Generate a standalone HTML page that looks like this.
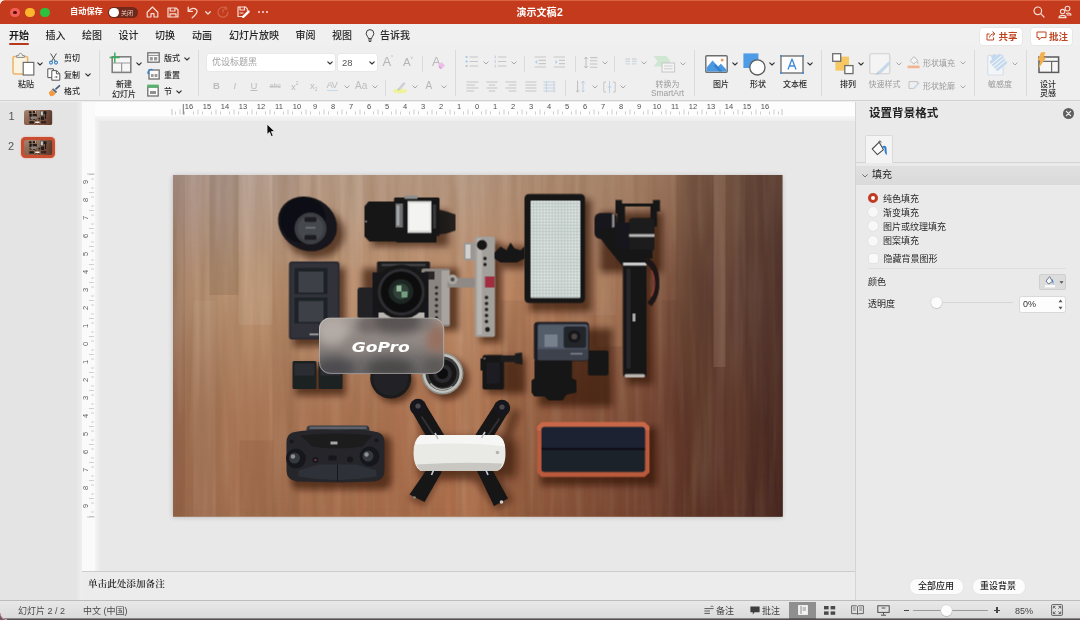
<!DOCTYPE html>
<html lang="zh-CN">
<head>
<meta charset="utf-8">
<title>演示文稿2</title>
<style>
*{box-sizing:border-box;margin:0;padding:0}
html,body{width:1080px;height:620px;overflow:hidden;background:#efeeee}
body{position:relative;font-family:"Liberation Sans","Noto Sans CJK SC",sans-serif;color:#2a2a2a;-webkit-font-smoothing:antialiased}
.abs{position:absolute}
.t{position:absolute;white-space:nowrap;line-height:1}
#titlebar{position:absolute;left:0;top:0;width:1080px;height:24px;background:#c43a1c;border-top:1px solid #dc6242}
#tabs{position:absolute;left:0;top:24px;width:1080px;height:22px;background:#f1f0f0}
#ribbon{position:absolute;left:0;top:46px;width:1080px;height:55px;background:#f0efef;border-bottom:1px solid #d2d1d1}
.tab{position:absolute;top:30px;font-size:10px;font-weight:500;color:#262626;white-space:nowrap;line-height:11px}
.sep{position:absolute;width:1px;background:#dcdbdb}
.lbl{position:absolute;font-size:8px;font-weight:500;color:#2b2b2b;white-space:nowrap;line-height:9px}
.lbl.g{color:#9b9b9b;font-weight:400}
.chev{position:absolute;width:6px;height:4px}
svg{position:absolute;overflow:visible}
#left{position:absolute;left:0;top:102px;width:81px;height:498px;background:#e5e4e5;border-right:1px solid #cfcfcf}
#vruler{position:absolute;left:82px;top:102px;width:13px;height:469px;background:#fafafa}
#hruler{position:absolute;left:95px;top:102px;width:760px;height:14px;background:#fdfdfd}
#edit{position:absolute;left:95px;top:116px;width:760px;height:455px;background:#e8e8e8}
#notes{position:absolute;left:82px;top:571px;width:773px;height:29px;background:#ececec;border-top:1px solid #cdcdcd}
#right{position:absolute;left:855px;top:102px;width:225px;height:498px;background:#eaeaea;border-left:1px solid #d4d4d4}
#status{position:absolute;left:0;top:600px;width:1080px;height:20px;background:linear-gradient(#e9e8e9,#dbdadb);border-top:1px solid #bdbcbd}
.rt{position:absolute;font-size:9px;color:#262626;white-space:nowrap;line-height:10px}
.st{position:absolute;font-size:9px;color:#4a4a4a;white-space:nowrap;line-height:10px;top:606px}
</style>
</head>
<body>
<div id="app" style="position:absolute;left:0;top:0;width:1080px;height:620px;will-change:transform;transform:translateZ(0)">
<div id="titlebar"></div>
<!-- traffic lights -->
<div class="abs" style="left:10px;top:7.5px;width:9.5px;height:9.5px;border-radius:50%;background:#f35f57"></div>
<div class="abs" style="left:13px;top:10.5px;width:3.5px;height:3.5px;border-radius:50%;background:#5e0c08"></div>
<div class="abs" style="left:25px;top:7.5px;width:9.5px;height:9.5px;border-radius:50%;background:#fbb62d"></div>
<div class="abs" style="left:40px;top:7.5px;width:9.5px;height:9.5px;border-radius:50%;background:#2bc13f"></div>
<div class="t" style="left:70px;top:8px;font-size:8.2px;font-weight:700;color:#fff">自动保存</div>
<div class="abs" style="left:108px;top:7px;width:30px;height:10.5px;border-radius:6px;background:#6f281a"></div>
<div class="abs" style="left:109px;top:7.5px;width:9.5px;height:9.5px;border-radius:50%;background:#fff"></div>
<div class="t" style="left:121px;top:9.5px;font-size:6px;color:#e8cfc8">关闭</div>
<!-- home -->
<svg style="left:146px;top:6px" width="13" height="12" viewBox="0 0 13 12" fill="none" stroke="#f6ddd6" stroke-width="1.2" stroke-linejoin="round" stroke-linecap="round"><path d="M1.2 6.2 L6.5 1 L11.8 6.2 V11 H8 V7.6 H5 V11 H1.2 Z"/></svg>
<!-- save -->
<svg style="left:167px;top:6.5px" width="12" height="11" viewBox="0 0 12 11" fill="none" stroke="#f6ddd6" stroke-width="1.2" stroke-linejoin="round"><path d="M1 1 H9 L11 3 V10 H1 Z"/><path d="M3.2 1 V4 H8 V1"/><path d="M3 10 V6.8 H9 V10"/></svg>
<!-- undo -->
<svg style="left:187px;top:5.5px" width="12" height="13" viewBox="0 0 12 13" fill="none" stroke="#f6ddd6" stroke-width="1.3" stroke-linecap="round" stroke-linejoin="round"><path d="M1.2 1.2 V5.4 H5.4"/><path d="M1.6 5 C3.5 2 8 1.3 9.8 4.2 C11.2 6.6 8.6 9 5.2 11.8"/></svg>
<svg style="left:204.5px;top:10.5px" width="6" height="4" viewBox="0 0 6 4" fill="none" stroke="#f6ddd6" stroke-width="1.3" stroke-linecap="round" stroke-linejoin="round"><path d="M.7 .7 L3 3 L5.3 .7"/></svg>
<!-- redo (dim) -->
<svg style="left:217px;top:6px" width="12" height="12" viewBox="0 0 12 12" fill="none" stroke="#d2654b" stroke-width="1.2" stroke-linecap="round"><path d="M9.5 2.6 A5 5 0 1 0 11 6"/><path d="M6 3.5 V6.2"/><path d="M8.8 .8 L9.8 2.8 L7.6 3.2"/></svg>
<!-- save as -->
<svg style="left:237px;top:6px" width="13" height="12" viewBox="0 0 13 12" fill="none" stroke="#f6ddd6" stroke-width="1.2" stroke-linejoin="round" stroke-linecap="round"><path d="M5.5 10.5 H1 V1 H8.5 L10.3 2.8 V4.5"/><path d="M3 1 V4 H7.4 V1"/><path d="M3 7 H6"/><path d="M6.2 10.8 L11.6 5.6" stroke-width="2.4" stroke="#fff"/></svg>
<!-- dots -->
<div class="abs" style="left:258px;top:11px;width:2.2px;height:2.2px;border-radius:50%;background:#f6ddd6;box-shadow:4px 0 0 #f6ddd6,8px 0 0 #f6ddd6"></div>
<div class="t" style="left:516.5px;top:7px;font-size:10px;font-weight:700;color:#fff">演示文稿<span style="font-size:10.5px;margin-left:.5px">2</span></div>
<!-- search -->
<svg style="left:1033px;top:6px" width="12" height="12" viewBox="0 0 12 12" fill="none" stroke="#f6ddd6" stroke-width="1.2" stroke-linecap="round"><circle cx="4.8" cy="4.8" r="3.8"/><path d="M7.7 7.7 L11 11"/></svg>
<!-- people -->
<svg style="left:1058px;top:5px" width="14" height="14" viewBox="0 0 14 14" fill="none" stroke="#f6ddd6" stroke-width="1.1" stroke-linecap="round"><circle cx="9.5" cy="3.6" r="2.4"/><circle cx="4.6" cy="6.6" r="2.2"/><path d="M1 12.6 C1 9.6 8 9.6 8 12.6 Z"/><path d="M8.4 8.6 C10.4 7.6 13 8.4 13 10 H9"/></svg>
<!-- window corners -->
<div class="abs" style="left:0;top:0;width:5px;height:5px;background:radial-gradient(circle at 100% 100%,rgba(0,0,0,0) 4.5px,#f4e6e2 5px)"></div>
<div id="tabs"></div>
<div class="tab" style="left:9px;font-weight:700;color:#1e1e1e">开始</div>
<div class="abs" style="left:9px;top:43px;width:20px;height:2px;border-radius:1px;background:#b7391d"></div>
<div class="tab" style="left:45.5px">插入</div>
<div class="tab" style="left:82px">绘图</div>
<div class="tab" style="left:118.5px">设计</div>
<div class="tab" style="left:155px">切换</div>
<div class="tab" style="left:192px">动画</div>
<div class="tab" style="left:229px">幻灯片放映</div>
<div class="tab" style="left:295.5px">审阅</div>
<div class="tab" style="left:332px">视图</div>
<svg style="left:365px;top:28.5px" width="10" height="13" viewBox="0 0 10 13" fill="none" stroke="#3a3a3a" stroke-width="1" stroke-linecap="round"><path d="M3.4 9.2 C3.4 7.6 1.2 6.8 1.2 4.4 A3.8 3.8 0 0 1 8.8 4.4 C8.8 6.8 6.6 7.6 6.6 9.2 Z"/><path d="M3.6 11 H6.4"/><path d="M4.2 12.4 H5.8"/></svg>
<div class="tab" style="left:380px">告诉我</div>
<!-- share / comment -->
<div class="abs" style="left:980px;top:27.5px;width:41.5px;height:17.5px;border-radius:3px;background:#fff;box-shadow:0 0 0 .5px #dedede"></div>
<svg style="left:986px;top:31px" width="10" height="10" viewBox="0 0 10 10" fill="none" stroke="#c0431f" stroke-width="1" stroke-linecap="round" stroke-linejoin="round"><path d="M3.2 3 H1 V9 H7.6 V6.8"/><path d="M3.6 6.2 C3.8 4 5.4 2.8 8.6 2.8"/><path d="M6.8 .8 L8.9 2.8 L6.8 4.8"/></svg>
<div class="t" style="left:998.5px;top:31.5px;font-size:9.5px;font-weight:700;color:#bf4420">共享</div>
<div class="abs" style="left:1030.5px;top:27.5px;width:41.5px;height:17.5px;border-radius:3px;background:#fff;box-shadow:0 0 0 .5px #dedede"></div>
<svg style="left:1036px;top:31px" width="11" height="10" viewBox="0 0 11 10" fill="none" stroke="#c0431f" stroke-width="1" stroke-linejoin="round"><path d="M1 1 H10 V6.6 H5 L3 8.8 V6.6 H1 Z"/></svg>
<div class="t" style="left:1049px;top:31.5px;font-size:9.5px;font-weight:700;color:#bf4420">批注</div>
<div id="ribbon"></div>
<!-- chevron symbol defs -->
<svg width="0" height="0" style="left:-10px;top:-10px"><defs>
<symbol id="cv" viewBox="0 0 6 4"><path d="M.8 .8 L3 3 L5.2 .8" fill="none" stroke="#333" stroke-width="1.15" stroke-linecap="round" stroke-linejoin="round"/></symbol>
<symbol id="cvg" viewBox="0 0 6 4"><path d="M.8 .8 L3 3 L5.2 .8" fill="none" stroke="#a9a9a9" stroke-width="1" stroke-linecap="round" stroke-linejoin="round"/></symbol>
</defs></svg>
<!-- paste -->
<svg style="left:12px;top:52px" width="23" height="24" viewBox="0 0 23 24" fill="none"><rect x="1" y="4.4" width="14.6" height="17.6" rx="1.4" fill="#fbf3e2" stroke="#e9b565" stroke-width="1.5"/><path d="M4.6 5.4 V3.6 H6.6 C6.6 .6 10.4 .6 10.4 3.6 H12.4 V5.4 Z" fill="#f3f3f3" stroke="#8d8d8d" stroke-width="1"/><rect x="11.2" y="10.4" width="10.6" height="12.6" fill="#fff" stroke="#6e6e6e" stroke-width="1.2"/></svg>
<svg style="left:36.5px;top:61.5px" width="6" height="4"><use href="#cv"/></svg>
<div class="lbl" style="left:18px;top:79.5px">粘贴</div>
<!-- cut -->
<svg style="left:49px;top:52.5px" width="9" height="12" viewBox="0 0 9 12" fill="none" stroke-linecap="round"><path d="M1.8 .8 L6.4 8.4" stroke="#555" stroke-width="1"/><path d="M7.2 .8 L2.6 8.4" stroke="#555" stroke-width="1"/><circle cx="2" cy="9.6" r="1.5" stroke="#3b86c8" stroke-width="1.1"/><circle cx="7" cy="9.6" r="1.5" stroke="#3b86c8" stroke-width="1.1"/></svg>
<div class="lbl" style="left:64px;top:54px">剪切</div>
<!-- copy -->
<svg style="left:47px;top:68px" width="14" height="13" viewBox="0 0 14 13" fill="none" stroke="#555" stroke-width="1" stroke-linejoin="round"><path d="M4.8 9.6 H.8 V.8 H6.4 V2.2" fill="#fff"/><path d="M4.8 2.6 H9.6 L12.8 5.6 V12.2 H4.8 Z" fill="#fff"/><path d="M9.4 2.8 V5.8 H12.6"/><path d="M7.6 9 H10.2 M9.2 8 L10.2 9 L9.2 10" stroke-width=".7"/></svg>
<div class="lbl" style="left:64px;top:70.5px">复制</div>
<svg style="left:84.5px;top:72.5px" width="6" height="4"><use href="#cv"/></svg>
<!-- format painter -->
<svg style="left:47.5px;top:84.5px" width="13" height="12" viewBox="0 0 13 12" fill="none"><path d="M8 3.8 L11.4 .8" stroke="#4b5e78" stroke-width="1.8" stroke-linecap="round"/><path d="M5.2 3.2 L9.2 6.8 L7.8 8.2 L3.8 4.6 Z" fill="#5a6a80"/><path d="M3.6 4.8 L7.6 8.6 C6.4 10.6 4.4 11.4 2.6 11.2 C1.6 10 .8 8.4 1 7.2 C2 6.6 3 5.8 3.6 4.8 Z" fill="#f29a3e"/></svg>
<div class="lbl" style="left:64px;top:87px">格式</div>
<div class="sep" style="left:99px;top:50px;height:46px"></div>
<!-- new slide -->
<svg style="left:108.5px;top:51.5px" width="23" height="22" viewBox="0 0 23 22" fill="none"><rect x="3.2" y="4.8" width="18.6" height="15.6" fill="#f6f6f6" stroke="#808080" stroke-width="1.6"/><path d="M3.4 11 H21.6 M12.6 11 V20" stroke="#9a9a9a" stroke-width="1.2"/><path d="M5.8 .6 V10.8 M.6 5.6 H10.8" stroke="#3fae5d" stroke-width="1.5"/></svg>
<svg style="left:135.5px;top:61.5px" width="6" height="4"><use href="#cv"/></svg>
<div class="lbl" style="left:116px;top:80px">新建</div>
<div class="lbl" style="left:112px;top:89.5px">幻灯片</div>
<!-- layout -->
<svg style="left:146.5px;top:52px" width="13" height="11" viewBox="0 0 13 11" fill="none"><rect x=".8" y=".8" width="11.4" height="9.4" fill="#fafafa" stroke="#6f6f6f" stroke-width="1.3"/><path d="M1 3.4 H12" stroke="#8a8a8a" stroke-width="1"/><rect x="2.8" y="5" width="3" height="3.4" fill="#9a9a9a"/><rect x="7" y="5" width="3.2" height="3.4" fill="#9a9a9a"/></svg>
<div class="lbl" style="left:164px;top:54px">版式</div>
<svg style="left:184px;top:56.5px" width="6" height="4"><use href="#cv"/></svg>
<!-- reset -->
<svg style="left:146.5px;top:68px" width="13" height="12" viewBox="0 0 13 12" fill="none"><rect x="2" y="2" width="10.2" height="9" fill="#fafafa" stroke="#6f6f6f" stroke-width="1.3"/><rect x="4" y="6" width="2.6" height="3" fill="#9a9a9a"/><rect x="7.6" y="6" width="2.8" height="3" fill="#9a9a9a"/><path d="M1 5.6 C.6 2.6 3 .8 5.6 1.6" stroke="#2f84d0" stroke-width="1.3" fill="none"/><path d="M.2 4.4 L1.2 6.6 L3 5" fill="#2f84d0"/></svg>
<div class="lbl" style="left:164px;top:70.5px">重置</div>
<!-- section -->
<svg style="left:146.5px;top:84px" width="12" height="13" viewBox="0 0 12 13" fill="none"><rect x=".8" y="3" width="10.4" height="9" fill="#fafafa" stroke="#6f6f6f" stroke-width="1.3"/><rect x=".2" y=".6" width="11.6" height="3" fill="#55b36a"/><rect x="3" y="7" width="6" height="3" fill="#8f8f8f"/></svg>
<div class="lbl" style="left:164px;top:87px">节</div>
<svg style="left:175.5px;top:89.5px" width="6" height="4"><use href="#cv"/></svg>
<div class="sep" style="left:198px;top:50px;height:46px"></div>
<!-- font box -->
<div class="abs" style="left:207px;top:53.5px;width:128px;height:17.5px;border-radius:2.5px;background:#fff;box-shadow:0 0 0 .5px #e2e2e2"></div>
<div class="t" style="left:212px;top:57.5px;font-size:9px;color:#a2a2a2">优设标题黑</div>
<svg style="left:327px;top:60.5px" width="6" height="4"><use href="#cv"/></svg>
<div class="abs" style="left:338px;top:53.5px;width:38.5px;height:17.5px;border-radius:2.5px;background:#fff;box-shadow:0 0 0 .5px #e2e2e2"></div>
<div class="t" style="left:342px;top:57.5px;font-size:9.5px;color:#555">28</div>
<svg style="left:369px;top:60.5px" width="6" height="4"><use href="#cv"/></svg>
<div class="t" style="left:382.5px;top:54.5px;font-size:13px;color:#b4b4b4">A<span style="font-size:5px;vertical-align:7px;margin-left:-.5px">^</span></div>
<div class="t" style="left:403px;top:56px;font-size:11.5px;color:#b4b4b4">A<span style="font-size:5px;vertical-align:6px;margin-left:-.5px">˅</span></div>
<div class="sep" style="left:422px;top:56px;height:16px"></div>
<div class="t" style="left:432px;top:55px;font-size:13px;color:#b9b9b9">A</div>
<svg style="left:437px;top:61px" width="9" height="9" viewBox="0 0 9 9"><path d="M1 4.4 L4.4 1 L8 4.6 L4.6 8 Z" fill="#e9bfe9"/><path d="M2 5.4 L4 7.4" stroke="#d99bd9" stroke-width="1.4"/></svg>
<!-- row 2 -->
<div class="t" style="left:213px;top:80.5px;font-size:9.5px;font-weight:700;color:#bcbcbc">B</div>
<div class="t" style="left:233.5px;top:80.5px;font-size:9.5px;font-style:italic;color:#bcbcbc">I</div>
<div class="t" style="left:250.5px;top:80.5px;font-size:9.5px;color:#bcbcbc;text-decoration:underline">U</div>
<div class="t" style="left:269.5px;top:82px;font-size:7px;color:#c2c2c2;text-decoration:line-through">abc</div>
<div class="t" style="left:291px;top:81px;font-size:9.5px;color:#bcbcbc">x<span style="font-size:5px;vertical-align:5px">2</span></div>
<div class="t" style="left:310px;top:81px;font-size:9.5px;color:#bcbcbc">x<span style="font-size:5px;vertical-align:-2px">2</span></div>
<div class="t" style="left:326.5px;top:79.5px;font-size:9.5px;color:#bcbcbc;letter-spacing:-.6px">AV</div>
<div class="abs" style="left:327px;top:89.5px;width:11px;height:1.2px;background:#c5d9ea"></div>
<svg style="left:344px;top:85px" width="6" height="4"><use href="#cvg"/></svg>
<div class="t" style="left:355px;top:81px;font-size:10px;color:#bcbcbc">Aa</div>
<svg style="left:372px;top:85px" width="6" height="4"><use href="#cvg"/></svg>
<div class="sep" style="left:385px;top:80px;height:16px"></div>
<svg style="left:393px;top:79.5px" width="16" height="14" viewBox="0 0 16 14"><ellipse cx="7" cy="11" rx="7" ry="2.6" fill="#eef29a"/><path d="M5 8.6 L10.6 2 L12.6 3.8 L7 10 Z" fill="#cfcfd6"/><path d="M4.2 10.4 L5.2 8.6 L6.8 10 Z" fill="#b9b9c4"/></svg>
<svg style="left:412px;top:85px" width="6" height="4"><use href="#cvg"/></svg>
<div class="t" style="left:425.5px;top:80.5px;font-size:10px;color:#b6b6b6">A</div>
<svg style="left:440.5px;top:85px" width="6" height="4"><use href="#cvg"/></svg>
<div class="sep" style="left:455px;top:50px;height:46px"></div>
<!-- paragraph group (disabled look) -->
<svg style="left:465px;top:55px" width="14" height="13" viewBox="0 0 14 13" fill="none"><g fill="#9fc3e6"><circle cx="1.6" cy="2" r="1.1"/><circle cx="1.6" cy="6.5" r="1.1"/></g><circle cx="1.6" cy="11" r="1.1" fill="#bdbdbd"/><path d="M4.6 2 H13 M4.6 6.5 H13 M4.6 11 H13" stroke="#c6c6c6" stroke-width="1.2"/></svg>
<svg style="left:482.5px;top:61px" width="6" height="4"><use href="#cvg"/></svg>
<svg style="left:494px;top:55px" width="13" height="13" viewBox="0 0 13 13" fill="none"><path d="M1.2 .6 V3.2 M1.2 5.2 V7.8 M1.2 9.8 V12.4" stroke="#bcc9d6" stroke-width="1"/><path d="M4 2 H12.4 M4 6.5 H12.4 M4 11 H12.4" stroke="#c6c6c6" stroke-width="1.2"/></svg>
<svg style="left:511px;top:61px" width="6" height="4"><use href="#cvg"/></svg>
<div class="sep" style="left:524px;top:56px;height:16px"></div>
<svg style="left:534px;top:56px" width="13" height="12" viewBox="0 0 13 12" fill="none"><path d="M.6 1 H12 M4.6 4.4 H12 M4.6 7.6 H12 M.6 11 H12" stroke="#c8c8c8" stroke-width="1.1"/><path d="M3.2 4 L1 6 L3.2 8 Z" fill="#b5cbe0"/></svg>
<svg style="left:553px;top:56px" width="13" height="12" viewBox="0 0 13 12" fill="none"><path d="M.6 1 H12 M6 4.4 H12 M6 7.6 H12 M.6 11 H12" stroke="#c8c8c8" stroke-width="1.1"/><path d="M2.4 4 L4.6 6 L2.4 8 Z" fill="#b5cbe0"/></svg>
<div class="sep" style="left:575px;top:56px;height:16px"></div>
<svg style="left:584px;top:55.5px" width="14" height="13" viewBox="0 0 14 13" fill="none"><path d="M2 1 V12 M.4 3 L2 1 L3.6 3 M.4 10 L2 12 L3.6 10" stroke="#bdbdbd" stroke-width="1"/><path d="M6 1.6 H13.4 M6 4.8 H13.4 M6 8 H13.4 M6 11.2 H13.4" stroke="#c6c6c6" stroke-width="1.1"/></svg>
<svg style="left:601.5px;top:61px" width="6" height="4"><use href="#cvg"/></svg>
<div class="sep" style="left:614px;top:56px;height:16px"></div>
<svg style="left:625px;top:58px" width="12" height="8" viewBox="0 0 12 8" fill="none"><path d="M.4 1 H5 M.4 3.4 H5 M.4 5.8 H5 M7 1 H11.6 M7 3.4 H11.6 M7 5.8 H11.6" stroke="#cfd8e0" stroke-width="1.3"/></svg>
<svg style="left:641px;top:61px" width="6" height="4"><use href="#cvg"/></svg>
<!-- smartart -->
<svg style="left:652.5px;top:55px" width="23" height="18" viewBox="0 0 23 18" fill="none"><path d="M.6 1 H13.4 L17.4 6.2 L13.4 11.6 H.6 L4.6 6.2 Z" fill="#cfe6d2"/><rect x="9" y="8" width="12.6" height="9" fill="#f4f4f4" stroke="#c6c6c6" stroke-width="1"/><path d="M11 11 H19.6 M11 13.8 H19.6" stroke="#cdcdcd" stroke-width="1"/></svg>
<svg style="left:679.5px;top:62px" width="6" height="4"><use href="#cvg"/></svg>
<div class="lbl g" style="left:655.5px;top:79.5px">转换为</div>
<div class="lbl g" style="left:651px;top:89px;font-size:8.4px">SmartArt</div>
<!-- row 2 paragraph -->
<svg style="left:466px;top:81px" width="13" height="11" viewBox="0 0 13 11" fill="none"><path d="M.4 1 H12.4 M.4 4 H9 M.4 7 H12.4 M.4 10 H8" stroke="#c6c6c6" stroke-width="1.1"/></svg>
<svg style="left:485.5px;top:81px" width="12" height="11" viewBox="0 0 12 11" fill="none"><path d="M.4 1 H11.4 M2.6 4 H9.2 M.4 7 H11.4 M2.6 10 H9.2" stroke="#c6c6c6" stroke-width="1.1"/></svg>
<svg style="left:505px;top:81px" width="12" height="11" viewBox="0 0 12 11" fill="none"><path d="M.4 1 H11.4 M3.6 4 H11.4 M.4 7 H11.4 M3.6 10 H11.4" stroke="#c6c6c6" stroke-width="1.1"/></svg>
<svg style="left:524.5px;top:81px" width="12" height="11" viewBox="0 0 12 11" fill="none"><path d="M.4 1 H11.4 M.4 4 H11.4 M.4 7 H11.4 M.4 10 H11.4" stroke="#c6c6c6" stroke-width="1.1"/></svg>
<svg style="left:543px;top:80.5px" width="14" height="12" viewBox="0 0 14 12" fill="none"><path d="M.4 1 H12.4 M.4 4 H12.4 M.4 7 H12.4 M.4 10 H12.4" stroke="#c4d3e2" stroke-width="1.1"/><path d="M3.4 0 V11.6 M11 0 V11.6" stroke="#c4d3e2" stroke-width="1"/></svg>
<div class="sep" style="left:565px;top:80px;height:16px"></div>
<svg style="left:575.5px;top:80px" width="10" height="13" viewBox="0 0 10 13" fill="none"><path d="M1.6 .6 V12 M.2 10.4 L1.6 12.2 L3 10.4" stroke="#bdbdbd" stroke-width="1"/><path d="M7 1 V12 M5.2 3.4 L7 1 L8.8 3.4 M5.6 10.4 L7 12 L8.4 10.4" stroke="#bcd0e4" stroke-width="1"/></svg>
<svg style="left:591.5px;top:85px" width="6" height="4"><use href="#cvg"/></svg>
<svg style="left:603px;top:80.5px" width="13" height="12" viewBox="0 0 13 12" fill="none"><path d="M3 1 H.8 V11 H3 M10 1 H12.2 V11 H10" stroke="#c6c6c6" stroke-width="1"/><path d="M6.5 0 V12 M4.6 6 H8.4" stroke="#bcd0e4" stroke-width="1"/></svg>
<svg style="left:620px;top:85px" width="6" height="4"><use href="#cvg"/></svg>
<div class="sep" style="left:694px;top:50px;height:46px"></div>
<!-- picture -->
<svg style="left:704.5px;top:55px" width="23" height="18" viewBox="0 0 23 18" fill="none"><rect x=".8" y=".8" width="21.4" height="16.4" rx="1" fill="#fdfdfd" stroke="#6d6d6d" stroke-width="1.4"/><path d="M1.6 12.4 L7.6 5.6 L13 11.6 L15.8 8.8 L21.4 14.6 V16.4 H1.6 Z" fill="#4a98e2"/><path d="M10.6 9 L17.6 16.4 H14 L8.8 11 Z" fill="#2f77c2" opacity=".75"/><circle cx="17.2" cy="5" r="1.5" fill="#e99a62"/></svg>
<svg style="left:731.5px;top:62px" width="6" height="4"><use href="#cv"/></svg>
<div class="lbl" style="left:713px;top:80px">图片</div>
<!-- shapes -->
<svg style="left:743px;top:52.5px" width="23" height="23" viewBox="0 0 23 23" fill="none"><rect x=".4" y=".4" width="15" height="14.6" fill="#4f9ce6"/><circle cx="14.4" cy="14.4" r="7.6" fill="#fdfdfd" stroke="#5a5a5a" stroke-width="1.3"/></svg>
<svg style="left:768.5px;top:62px" width="6" height="4"><use href="#cv"/></svg>
<div class="lbl" style="left:750px;top:80px">形状</div>
<!-- textbox -->
<svg style="left:779.5px;top:54.5px" width="24" height="19" viewBox="0 0 24 19" fill="none"><rect x="1" y="1" width="22" height="17" fill="#fdfdfd" stroke="#5d5d5d" stroke-width="1.2"/><g fill="#4a90d6"><rect x="0" y="0" width="2" height="2"/><rect x="22" y="0" width="2" height="2"/><rect x="0" y="17" width="2" height="2"/><rect x="22" y="17" width="2" height="2"/></g><path d="M8 14.6 L12 4 L16 14.6 M9.4 11 H14.6" stroke="#3f8ad6" stroke-width="1.3" stroke-linejoin="round"/></svg>
<svg style="left:806.5px;top:62px" width="6" height="4"><use href="#cv"/></svg>
<div class="lbl" style="left:783px;top:80px">文本框</div>
<div class="sep" style="left:821px;top:50px;height:46px"></div>
<!-- arrange -->
<svg style="left:832px;top:52.5px" width="22" height="22" viewBox="0 0 22 22" fill="none"><rect x="3.4" y="3.6" width="13.6" height="14" fill="#f7c862"/><rect x=".7" y=".7" width="8" height="7.6" fill="#fdfdfd" stroke="#6d6d6d" stroke-width="1.3"/><rect x="12.8" y="12.6" width="8.2" height="8" fill="#fdfdfd" stroke="#6d6d6d" stroke-width="1.3"/></svg>
<svg style="left:858px;top:62px" width="6" height="4"><use href="#cv"/></svg>
<div class="lbl" style="left:840px;top:79.5px">排列</div>
<!-- quick styles -->
<svg style="left:869px;top:52.5px" width="23" height="23" viewBox="0 0 23 23" fill="none"><rect x=".8" y=".8" width="20" height="20" rx="1.6" fill="#f4f4f4" stroke="#cfcfcf" stroke-width="1.1"/><path d="M8.6 19 L19.6 8.4 L21.8 10.4 L11.4 21 Z" fill="#c6d9ea"/><path d="M6.2 21.8 L8.8 18.8 L11.6 21 Z" fill="#b7cce0"/></svg>
<svg style="left:895.5px;top:62px" width="6" height="4"><use href="#cvg"/></svg>
<div class="lbl g" style="left:868.5px;top:79.5px">快速样式</div>
<!-- shape fill -->
<svg style="left:906.5px;top:55px" width="13" height="14" viewBox="0 0 13 14" fill="none"><path d="M3.2 5.6 L7 1.6 L10.6 5.4 L6.8 9 Z" fill="#f5f5f5" stroke="#b9b9b9" stroke-width="1"/><path d="M10.8 6 C11.8 7.4 11.8 8.6 10.8 8.8 C9.8 8.6 9.8 7.4 10.8 6 Z" fill="#bdbdbd"/><rect x=".6" y="10.6" width="12" height="2.6" fill="#f2b48c"/></svg>
<div class="lbl g" style="left:923px;top:58.5px">形状填充</div>
<svg style="left:959.5px;top:60.5px" width="6" height="4"><use href="#cvg"/></svg>
<svg style="left:907.5px;top:80px" width="12" height="10" viewBox="0 0 12 10" fill="none"><path d="M1 1.6 H9.6 V5 M5 8.4 H1 V1.6" stroke="#c2c2c2" stroke-width="1"/><path d="M4.6 8.8 L10.6 2 L11.8 3 L6 9.4 Z" fill="#c4d6e8"/></svg>
<div class="lbl g" style="left:923px;top:82px">形状轮廓</div>
<svg style="left:959.5px;top:84.5px" width="6" height="4"><use href="#cvg"/></svg>
<div class="sep" style="left:974px;top:50px;height:46px"></div>
<!-- sensitivity -->
<svg style="left:987px;top:51.5px" width="22" height="24" viewBox="0 0 22 24" fill="none"><rect x=".8" y="3.4" width="15.4" height="19.6" rx="1" fill="#f3f6f9" stroke="#d5dde6" stroke-width="1.1"/><g transform="rotate(-40 12 10)"><rect x="4.6" y="3.6" width="13.6" height="12.6" rx="1.6" fill="#c3d9ee"/><path d="M4.6 7 H18.2 M4.6 10 H18.2 M4.6 13 H18.2" stroke="#f3f6f9" stroke-width="1"/><rect x="8.8" y="0.8" width="5" height="3" fill="#c3d9ee"/></g></svg>
<svg style="left:1011.5px;top:62px" width="6" height="4"><use href="#cvg"/></svg>
<div class="lbl g" style="left:988px;top:79.5px">敏感度</div>
<div class="sep" style="left:1026px;top:50px;height:46px"></div>
<!-- design ideas -->
<svg style="left:1035.5px;top:51.5px" width="24" height="22" viewBox="0 0 24 22" fill="none"><rect x="3" y="5" width="19.6" height="15.4" fill="#f6f6f6" stroke="#5b5b5b" stroke-width="1.5"/><path d="M3.4 9.4 H22.4 M15.6 9.6 V20" stroke="#6a6a6a" stroke-width="1.2"/><path d="M5 .2 H9.6 L7.4 5.6 H10.2 L2.6 16.6 L4.4 8.6 H1.6 Z" fill="#f4b04c"/></svg>
<div class="lbl" style="left:1040px;top:79.5px">设计</div>
<div class="lbl" style="left:1040px;top:89px">灵感</div>
<div id="left"></div>
<div class="abs" style="left:76px;top:102px;width:5px;height:498px;background:linear-gradient(90deg,#e5e4e5,#ededed)"></div>
<div class="abs" style="left:82px;top:102px;width:13px;height:14px;background:#ececec"></div>
<div id="edit"></div>
<div class="t" style="left:8.5px;top:110.5px;font-size:11px;color:#555">1</div>
<div class="t" style="left:8px;top:140.5px;font-size:11px;color:#555">2</div>
<div id="hruler"></div>
<div class="abs" style="left:95px;top:116px;width:760px;height:5px;background:linear-gradient(#f6f6f6,#eeeeee)"></div>
<svg style="left:95px;top:102px" width="760" height="14" fill="none" stroke="#b8b8b8" stroke-width=".7"><path d="M80.50 9.5 V12.5"/><path d="M85.00 7.5 V12.5"/><path d="M89.50 9.5 V12.5"/><path d="M98.50 9.5 V12.5"/><path d="M103.00 7.5 V12.5"/><path d="M107.50 9.5 V12.5"/><path d="M116.50 9.5 V12.5"/><path d="M121.00 7.5 V12.5"/><path d="M125.50 9.5 V12.5"/><path d="M134.50 9.5 V12.5"/><path d="M139.00 7.5 V12.5"/><path d="M143.50 9.5 V12.5"/><path d="M152.50 9.5 V12.5"/><path d="M157.00 7.5 V12.5"/><path d="M161.50 9.5 V12.5"/><path d="M170.50 9.5 V12.5"/><path d="M175.00 7.5 V12.5"/><path d="M179.50 9.5 V12.5"/><path d="M188.50 9.5 V12.5"/><path d="M193.00 7.5 V12.5"/><path d="M197.50 9.5 V12.5"/><path d="M206.50 9.5 V12.5"/><path d="M211.00 7.5 V12.5"/><path d="M215.50 9.5 V12.5"/><path d="M224.50 9.5 V12.5"/><path d="M229.00 7.5 V12.5"/><path d="M233.50 9.5 V12.5"/><path d="M242.50 9.5 V12.5"/><path d="M247.00 7.5 V12.5"/><path d="M251.50 9.5 V12.5"/><path d="M260.50 9.5 V12.5"/><path d="M265.00 7.5 V12.5"/><path d="M269.50 9.5 V12.5"/><path d="M278.50 9.5 V12.5"/><path d="M283.00 7.5 V12.5"/><path d="M287.50 9.5 V12.5"/><path d="M296.50 9.5 V12.5"/><path d="M301.00 7.5 V12.5"/><path d="M305.50 9.5 V12.5"/><path d="M314.50 9.5 V12.5"/><path d="M319.00 7.5 V12.5"/><path d="M323.50 9.5 V12.5"/><path d="M332.50 9.5 V12.5"/><path d="M337.00 7.5 V12.5"/><path d="M341.50 9.5 V12.5"/><path d="M350.50 9.5 V12.5"/><path d="M355.00 7.5 V12.5"/><path d="M359.50 9.5 V12.5"/><path d="M368.50 9.5 V12.5"/><path d="M373.00 7.5 V12.5"/><path d="M377.50 9.5 V12.5"/><path d="M386.50 9.5 V12.5"/><path d="M391.00 7.5 V12.5"/><path d="M395.50 9.5 V12.5"/><path d="M404.50 9.5 V12.5"/><path d="M409.00 7.5 V12.5"/><path d="M413.50 9.5 V12.5"/><path d="M422.50 9.5 V12.5"/><path d="M427.00 7.5 V12.5"/><path d="M431.50 9.5 V12.5"/><path d="M440.50 9.5 V12.5"/><path d="M445.00 7.5 V12.5"/><path d="M449.50 9.5 V12.5"/><path d="M458.50 9.5 V12.5"/><path d="M463.00 7.5 V12.5"/><path d="M467.50 9.5 V12.5"/><path d="M476.50 9.5 V12.5"/><path d="M481.00 7.5 V12.5"/><path d="M485.50 9.5 V12.5"/><path d="M494.50 9.5 V12.5"/><path d="M499.00 7.5 V12.5"/><path d="M503.50 9.5 V12.5"/><path d="M512.50 9.5 V12.5"/><path d="M517.00 7.5 V12.5"/><path d="M521.50 9.5 V12.5"/><path d="M530.50 9.5 V12.5"/><path d="M535.00 7.5 V12.5"/><path d="M539.50 9.5 V12.5"/><path d="M548.50 9.5 V12.5"/><path d="M553.00 7.5 V12.5"/><path d="M557.50 9.5 V12.5"/><path d="M566.50 9.5 V12.5"/><path d="M571.00 7.5 V12.5"/><path d="M575.50 9.5 V12.5"/><path d="M584.50 9.5 V12.5"/><path d="M589.00 7.5 V12.5"/><path d="M593.50 9.5 V12.5"/><path d="M602.50 9.5 V12.5"/><path d="M607.00 7.5 V12.5"/><path d="M611.50 9.5 V12.5"/><path d="M620.50 9.5 V12.5"/><path d="M625.00 7.5 V12.5"/><path d="M629.50 9.5 V12.5"/><path d="M638.50 9.5 V12.5"/><path d="M643.00 7.5 V12.5"/><path d="M647.50 9.5 V12.5"/><path d="M656.50 9.5 V12.5"/><path d="M661.00 7.5 V12.5"/><path d="M665.50 9.5 V12.5"/><path d="M674.50 9.5 V12.5"/><path d="M679.00 7.5 V12.5"/><path d="M683.50 9.5 V12.5"/><path d="M77 7 V13 M687 7 V13" stroke="#aaa"/><path d="M88.30000000000001 2 V12.5" stroke="#777" stroke-width="1"/></svg>
<div class="t" style="left:181.0px;top:102.6px;width:16px;text-align:center;font-size:7.5px;color:#4f4f4f">16</div>
<div class="t" style="left:199.0px;top:102.6px;width:16px;text-align:center;font-size:7.5px;color:#4f4f4f">15</div>
<div class="t" style="left:217.0px;top:102.6px;width:16px;text-align:center;font-size:7.5px;color:#4f4f4f">14</div>
<div class="t" style="left:235.0px;top:102.6px;width:16px;text-align:center;font-size:7.5px;color:#4f4f4f">13</div>
<div class="t" style="left:253.0px;top:102.6px;width:16px;text-align:center;font-size:7.5px;color:#4f4f4f">12</div>
<div class="t" style="left:271.0px;top:102.6px;width:16px;text-align:center;font-size:7.5px;color:#4f4f4f">11</div>
<div class="t" style="left:289.0px;top:102.6px;width:16px;text-align:center;font-size:7.5px;color:#4f4f4f">10</div>
<div class="t" style="left:307.0px;top:102.6px;width:16px;text-align:center;font-size:7.5px;color:#4f4f4f">9</div>
<div class="t" style="left:325.0px;top:102.6px;width:16px;text-align:center;font-size:7.5px;color:#4f4f4f">8</div>
<div class="t" style="left:343.0px;top:102.6px;width:16px;text-align:center;font-size:7.5px;color:#4f4f4f">7</div>
<div class="t" style="left:361.0px;top:102.6px;width:16px;text-align:center;font-size:7.5px;color:#4f4f4f">6</div>
<div class="t" style="left:379.0px;top:102.6px;width:16px;text-align:center;font-size:7.5px;color:#4f4f4f">5</div>
<div class="t" style="left:397.0px;top:102.6px;width:16px;text-align:center;font-size:7.5px;color:#4f4f4f">4</div>
<div class="t" style="left:415.0px;top:102.6px;width:16px;text-align:center;font-size:7.5px;color:#4f4f4f">3</div>
<div class="t" style="left:433.0px;top:102.6px;width:16px;text-align:center;font-size:7.5px;color:#4f4f4f">2</div>
<div class="t" style="left:451.0px;top:102.6px;width:16px;text-align:center;font-size:7.5px;color:#4f4f4f">1</div>
<div class="t" style="left:469.0px;top:102.6px;width:16px;text-align:center;font-size:7.5px;color:#4f4f4f">0</div>
<div class="t" style="left:487.0px;top:102.6px;width:16px;text-align:center;font-size:7.5px;color:#4f4f4f">1</div>
<div class="t" style="left:505.0px;top:102.6px;width:16px;text-align:center;font-size:7.5px;color:#4f4f4f">2</div>
<div class="t" style="left:523.0px;top:102.6px;width:16px;text-align:center;font-size:7.5px;color:#4f4f4f">3</div>
<div class="t" style="left:541.0px;top:102.6px;width:16px;text-align:center;font-size:7.5px;color:#4f4f4f">4</div>
<div class="t" style="left:559.0px;top:102.6px;width:16px;text-align:center;font-size:7.5px;color:#4f4f4f">5</div>
<div class="t" style="left:577.0px;top:102.6px;width:16px;text-align:center;font-size:7.5px;color:#4f4f4f">6</div>
<div class="t" style="left:595.0px;top:102.6px;width:16px;text-align:center;font-size:7.5px;color:#4f4f4f">7</div>
<div class="t" style="left:613.0px;top:102.6px;width:16px;text-align:center;font-size:7.5px;color:#4f4f4f">8</div>
<div class="t" style="left:631.0px;top:102.6px;width:16px;text-align:center;font-size:7.5px;color:#4f4f4f">9</div>
<div class="t" style="left:649.0px;top:102.6px;width:16px;text-align:center;font-size:7.5px;color:#4f4f4f">10</div>
<div class="t" style="left:667.0px;top:102.6px;width:16px;text-align:center;font-size:7.5px;color:#4f4f4f">11</div>
<div class="t" style="left:685.0px;top:102.6px;width:16px;text-align:center;font-size:7.5px;color:#4f4f4f">12</div>
<div class="t" style="left:703.0px;top:102.6px;width:16px;text-align:center;font-size:7.5px;color:#4f4f4f">13</div>
<div class="t" style="left:721.0px;top:102.6px;width:16px;text-align:center;font-size:7.5px;color:#4f4f4f">14</div>
<div class="t" style="left:739.0px;top:102.6px;width:16px;text-align:center;font-size:7.5px;color:#4f4f4f">15</div>
<div class="t" style="left:757.0px;top:102.6px;width:16px;text-align:center;font-size:7.5px;color:#4f4f4f">16</div>
<div id="vruler"></div>
<div class="abs" style="left:95px;top:121px;width:5px;height:450px;background:linear-gradient(90deg,#f4f4f4,#e9e9e9)"></div>
<svg style="left:82px;top:102px" width="13" height="469" fill="none" stroke="#bdbdbd" stroke-width=".7"><path d="M7 72.50 H12"/><path d="M9 77.00 H12"/><path d="M9 86.00 H12"/><path d="M7 90.50 H12"/><path d="M9 95.00 H12"/><path d="M9 104.00 H12"/><path d="M7 108.50 H12"/><path d="M9 113.00 H12"/><path d="M9 122.00 H12"/><path d="M7 126.50 H12"/><path d="M9 131.00 H12"/><path d="M9 140.00 H12"/><path d="M7 144.50 H12"/><path d="M9 149.00 H12"/><path d="M9 158.00 H12"/><path d="M7 162.50 H12"/><path d="M9 167.00 H12"/><path d="M9 176.00 H12"/><path d="M7 180.50 H12"/><path d="M9 185.00 H12"/><path d="M9 194.00 H12"/><path d="M7 198.50 H12"/><path d="M9 203.00 H12"/><path d="M9 212.00 H12"/><path d="M7 216.50 H12"/><path d="M9 221.00 H12"/><path d="M9 230.00 H12"/><path d="M7 234.50 H12"/><path d="M9 239.00 H12"/><path d="M9 248.00 H12"/><path d="M7 252.50 H12"/><path d="M9 257.00 H12"/><path d="M9 266.00 H12"/><path d="M7 270.50 H12"/><path d="M9 275.00 H12"/><path d="M9 284.00 H12"/><path d="M7 288.50 H12"/><path d="M9 293.00 H12"/><path d="M9 302.00 H12"/><path d="M7 306.50 H12"/><path d="M9 311.00 H12"/><path d="M9 320.00 H12"/><path d="M7 324.50 H12"/><path d="M9 329.00 H12"/><path d="M9 338.00 H12"/><path d="M7 342.50 H12"/><path d="M9 347.00 H12"/><path d="M9 356.00 H12"/><path d="M7 360.50 H12"/><path d="M9 365.00 H12"/><path d="M9 374.00 H12"/><path d="M7 378.50 H12"/><path d="M9 383.00 H12"/><path d="M9 392.00 H12"/><path d="M7 396.50 H12"/><path d="M9 401.00 H12"/><path d="M9 410.00 H12"/><path d="M7 414.50 H12"/><path d="M5 72 H12.5 M5 415 H12.5" stroke="#b0b0b0"/></svg>
<div class="t" style="left:78px;top:177.9px;width:16px;height:8px;text-align:center;font-size:7.5px;color:#5f5f5f;transform:rotate(-90deg)">9</div>
<div class="t" style="left:78px;top:195.9px;width:16px;height:8px;text-align:center;font-size:7.5px;color:#5f5f5f;transform:rotate(-90deg)">8</div>
<div class="t" style="left:78px;top:213.9px;width:16px;height:8px;text-align:center;font-size:7.5px;color:#5f5f5f;transform:rotate(-90deg)">7</div>
<div class="t" style="left:78px;top:231.9px;width:16px;height:8px;text-align:center;font-size:7.5px;color:#5f5f5f;transform:rotate(-90deg)">6</div>
<div class="t" style="left:78px;top:249.9px;width:16px;height:8px;text-align:center;font-size:7.5px;color:#5f5f5f;transform:rotate(-90deg)">5</div>
<div class="t" style="left:78px;top:267.9px;width:16px;height:8px;text-align:center;font-size:7.5px;color:#5f5f5f;transform:rotate(-90deg)">4</div>
<div class="t" style="left:78px;top:285.9px;width:16px;height:8px;text-align:center;font-size:7.5px;color:#5f5f5f;transform:rotate(-90deg)">3</div>
<div class="t" style="left:78px;top:303.9px;width:16px;height:8px;text-align:center;font-size:7.5px;color:#5f5f5f;transform:rotate(-90deg)">2</div>
<div class="t" style="left:78px;top:321.9px;width:16px;height:8px;text-align:center;font-size:7.5px;color:#5f5f5f;transform:rotate(-90deg)">1</div>
<div class="t" style="left:78px;top:339.9px;width:16px;height:8px;text-align:center;font-size:7.5px;color:#5f5f5f;transform:rotate(-90deg)">0</div>
<div class="t" style="left:78px;top:357.9px;width:16px;height:8px;text-align:center;font-size:7.5px;color:#5f5f5f;transform:rotate(-90deg)">1</div>
<div class="t" style="left:78px;top:375.9px;width:16px;height:8px;text-align:center;font-size:7.5px;color:#5f5f5f;transform:rotate(-90deg)">2</div>
<div class="t" style="left:78px;top:393.9px;width:16px;height:8px;text-align:center;font-size:7.5px;color:#5f5f5f;transform:rotate(-90deg)">3</div>
<div class="t" style="left:78px;top:411.9px;width:16px;height:8px;text-align:center;font-size:7.5px;color:#5f5f5f;transform:rotate(-90deg)">4</div>
<div class="t" style="left:78px;top:429.9px;width:16px;height:8px;text-align:center;font-size:7.5px;color:#5f5f5f;transform:rotate(-90deg)">5</div>
<div class="t" style="left:78px;top:447.9px;width:16px;height:8px;text-align:center;font-size:7.5px;color:#5f5f5f;transform:rotate(-90deg)">6</div>
<div class="t" style="left:78px;top:465.9px;width:16px;height:8px;text-align:center;font-size:7.5px;color:#5f5f5f;transform:rotate(-90deg)">7</div>
<div class="t" style="left:78px;top:483.9px;width:16px;height:8px;text-align:center;font-size:7.5px;color:#5f5f5f;transform:rotate(-90deg)">8</div>
<div class="t" style="left:78px;top:501.9px;width:16px;height:8px;text-align:center;font-size:7.5px;color:#5f5f5f;transform:rotate(-90deg)">9</div>
<svg width="0" height="0" style="left:-10px;top:-10px"><defs>
<linearGradient id="thG" x1="0" x2="1" y1="0" y2="0"><stop offset="0" stop-color="#a98570"/><stop offset=".5" stop-color="#a37a60"/><stop offset=".8" stop-color="#7c5644"/><stop offset="1" stop-color="#5e4034"/></linearGradient>
<linearGradient id="thV" x1="0" x2="0" y1="0" y2="1"><stop offset="0" stop-color="#000" stop-opacity="0"/><stop offset="1" stop-color="#5a2008" stop-opacity=".35"/></linearGradient>
<symbol id="thumb" viewBox="0 0 28.400 15">
<rect width="28.400" height="15" fill="url(#thG)"/><rect width="28.400" height="15" fill="url(#thV)"/>
<g fill="#1d1b1c" filter="url(#tb)">
<circle cx="6.300" cy="2.200" r="1.300"/><rect x="8.900" y="1.100" width="3.500" height="1.900"/><rect x="5.400" y="3.800" width="2.400" height="3.400"/><rect x="8.600" y="3.900" width="4.200" height="2.700"/><rect x="14.100" y="2.700" width="1" height="4.400" fill="#7d7873"/>
<rect x="16.400" y=".9" width="2.800" height="4.800"/><rect x="19.700" y="1.200" width="2.800" height="2.800"/><rect x="21" y="3.600" width="1.100" height="5.300"/>
<rect x="16.900" y="6.500" width="3.200" height="3.400"/><rect x="14.400" y="7.800" width="1.700" height="1.600"/><rect x="5.600" y="8.200" width="2.300" height="1.300"/><circle cx="10.100" cy="8.900" r="1"/><circle cx="12.500" cy="8.700" r="1" fill="#55524f"/>
<rect x="5.300" y="11.200" width="4.600" height="2.400"/><rect x="17" y="10.900" width="5.200" height="2.600" fill="#3a2420"/>
<path d="M11.200 9.800 L12.600 11.600 M15.500 9.800 L14.200 11.600 M12.600 13.200 L11.400 14.400 M14.300 13.200 L15.400 14.500" stroke="#1d1b1c" stroke-width=".7"/>
</g>
<rect x="16.700" y="1.300" width="2.200" height="4.100" fill="#c9d0cc"/>
<rect x="6.800" y="6.600" width="5.800" height="2.500" rx=".5" fill="#8a817c"/>
<rect x="11.300" y="11.400" width="4.200" height="1.700" rx=".5" fill="#eeeeea"/>
<rect x="11" y="1.200" width="1.100" height="1.400" fill="#e6e6e3"/>
</symbol>
<filter id="tb"><feGaussianBlur stdDeviation=".25"/></filter>
<clipPath id="thClip"><rect x="0" y="0" width="28.400" height="15" rx="2.600"/></clipPath>
</defs></svg>
<svg style="left:23.800px;top:110px" width="28.400" height="15" viewBox="0 0 28.400 15"><g clip-path="url(#thClip)"><use href="#thumb" width="28.400" height="15"/></g></svg>
<div class="abs" style="left:21px;top:137px;width:34.200px;height:20.800px;border-radius:4.500px;background:#c94e31;box-shadow:0 0 1.500px rgba(230,120,90,.9)"></div>
<svg style="left:23.800px;top:139.900px" width="28.400" height="15" viewBox="0 0 28.400 15"><g clip-path="url(#thClip)"><use href="#thumb" width="28.400" height="15"/></g></svg>
<!-- cursor -->
<svg style="left:266px;top:122.500px" width="10" height="15" viewBox="0 0 10 15"><path d="M1 1 V11.400 L3.500 9.200 L5.300 13.600 L7.200 12.800 L5.400 8.600 H8.800 Z" fill="#0b0b0b" stroke="#f4f4f4" stroke-width=".8" stroke-linejoin="round"/></svg>
<!-- slide shadow -->
<div class="abs" style="left:172.5px;top:174.5px;width:609.5px;height:341.5px;box-shadow:0 1px 5px rgba(0,0,0,.22)"></div>
<svg id="photo" style="left:172.5px;top:174.5px" width="609.5" height="341.5" viewBox="172.5 174.5 609.5 341.5" preserveAspectRatio="none">
<defs>
<linearGradient id="wTop" x1="172.5" x2="782.0" y1="0" y2="0" gradientUnits="userSpaceOnUse"><stop offset="0.001" stop-color="#ac948a"/><stop offset="0.111" stop-color="#b59d90"/><stop offset="0.258" stop-color="#b79a85"/><stop offset="0.505" stop-color="#b5967f"/><stop offset="0.701" stop-color="#a68268"/><stop offset="0.820" stop-color="#98715a"/><stop offset="0.852" stop-color="#805c49"/><stop offset="0.931" stop-color="#6a4c3d"/><stop offset="1.000" stop-color="#604236"/></linearGradient>
<linearGradient id="wMid" x1="172.5" x2="782.0" y1="0" y2="0" gradientUnits="userSpaceOnUse"><stop offset="0.001" stop-color="#aa856a"/><stop offset="0.127" stop-color="#ba9270"/><stop offset="0.291" stop-color="#b88c6a"/><stop offset="0.472" stop-color="#bb8a67"/><stop offset="0.578" stop-color="#b8815e"/><stop offset="0.701" stop-color="#a06e50"/><stop offset="0.800" stop-color="#80543e"/><stop offset="0.865" stop-color="#674437"/><stop offset="1.000" stop-color="#54362f"/></linearGradient>
<linearGradient id="wBot" x1="172.5" x2="782.0" y1="0" y2="0" gradientUnits="userSpaceOnUse"><stop offset="0.001" stop-color="#966448"/><stop offset="0.111" stop-color="#a57050"/><stop offset="0.373" stop-color="#a56948"/><stop offset="0.488" stop-color="#ac6c48"/><stop offset="0.603" stop-color="#8c553a"/><stop offset="0.783" stop-color="#6e3e2d"/><stop offset="1.000" stop-color="#4a2922"/></linearGradient>
<linearGradient id="m1G" x1="0" x2="0" y1="174.5" y2="516" gradientUnits="userSpaceOnUse"><stop offset="0" stop-color="#000"/><stop offset=".1" stop-color="#333"/><stop offset=".3" stop-color="#eee"/><stop offset=".36" stop-color="#fff"/></linearGradient>
<linearGradient id="m2G" x1="0" x2="0" y1="174.5" y2="516" gradientUnits="userSpaceOnUse"><stop offset=".36" stop-color="#000"/><stop offset=".55" stop-color="#757575"/><stop offset=".7" stop-color="#c8c8c8"/><stop offset="1" stop-color="#fff"/></linearGradient>
<mask id="m1" maskUnits="userSpaceOnUse" x="172" y="174" width="611" height="343"><rect x="172" y="174" width="611" height="343" fill="url(#m1G)"/></mask>
<mask id="m2" maskUnits="userSpaceOnUse" x="172" y="174" width="611" height="343"><rect x="172" y="174" width="611" height="343" fill="url(#m2G)"/></mask>
<filter id="grain" x="0" y="0" width="100%" height="100%"><feTurbulence type="fractalNoise" baseFrequency="0.09 0.006" numOctaves="3" seed="7"/><feColorMatrix values="0 0 0 0 .22  0 0 0 0 .12  0 0 0 0 .05  0 0 0 -1.6 1.05"/></filter>
<filter id="grainL" x="0" y="0" width="100%" height="100%"><feTurbulence type="fractalNoise" baseFrequency="0.12 0.008" numOctaves="2" seed="23"/><feColorMatrix values="0 0 0 0 1  0 0 0 0 .9  0 0 0 0 .75  0 0 0 -1.4 .82"/></filter>
<filter id="b1" x="-40%" y="-40%" width="180%" height="180%"><feGaussianBlur stdDeviation="1"/></filter>
<filter id="b2" x="-40%" y="-40%" width="180%" height="180%"><feGaussianBlur stdDeviation="2"/></filter>
<filter id="b3" x="-40%" y="-40%" width="180%" height="180%"><feGaussianBlur stdDeviation="3.2"/></filter>
<filter id="b5" x="-40%" y="-40%" width="180%" height="180%"><feGaussianBlur stdDeviation="5"/></filter>
<filter id="soft"><feGaussianBlur stdDeviation=".55"/></filter>
<pattern id="led" x="530" y="200" width="3.1" height="3.1" patternUnits="userSpaceOnUse"><rect width="3.1" height="3.1" fill="#bcc7c3"/><circle cx="1.55" cy="1.55" r="1.05" fill="#e9efeb"/></pattern>
<clipPath id="clipSlide"><rect x="172.5" y="174.5" width="609.5" height="341.5"/></clipPath>
</defs>
<g clip-path="url(#clipSlide)">
<!-- wood base -->
<rect x="172" y="174" width="611" height="343" fill="url(#wTop)"/>
<rect x="172" y="174" width="611" height="343" fill="url(#wMid)" mask="url(#m1)"/>
<rect x="172" y="174" width="611" height="343" fill="url(#wBot)" mask="url(#m2)"/>
<!-- planks -->
<g id="planks">
<rect x="172.5" y="174.5" width="12" height="342" fill="#3a1a0c" opacity=".08"/>
<rect x="209" y="174.5" width="29" height="120" fill="#2b1a12" opacity=".10"/>
<rect x="238" y="174.5" width="34" height="150" fill="#fff" opacity=".07"/>
<rect x="193" y="300" width="22" height="216" fill="#fff" opacity=".05"/>
<rect x="239" y="440" width="34" height="76" fill="#3a1a0c" opacity=".07"/>
<rect x="272" y="174.5" width="26" height="342" fill="#2b1a12" opacity=".05"/>
<rect x="340" y="174.5" width="22" height="200" fill="#fff" opacity=".05"/>
<rect x="455" y="174.5" width="24" height="342" fill="#fff" opacity=".05"/>
<rect x="500" y="300" width="30" height="216" fill="#2b1a12" opacity=".07"/>
<rect x="585" y="174.5" width="30" height="140" fill="#fff" opacity=".05"/>
<rect x="676" y="174.5" width="38" height="342" fill="#20100a" opacity=".12"/>
<rect x="713" y="174.5" width="12" height="192" fill="#d8b8a0" opacity=".16"/>
<rect x="745" y="174.5" width="37" height="342" fill="#1a0c08" opacity=".10"/>
<rect x="660" y="300" width="16" height="216" fill="#20100a" opacity=".08"/>
<rect x="596" y="268" width="26" height="78" fill="#f0c090" opacity=".13"/>
</g>
<rect x="172" y="174" width="611" height="343" filter="url(#grain)" opacity=".28"/>
<rect x="172" y="174" width="611" height="343" filter="url(#grainL)" opacity=".13"/>
<!-- OBJECTS_START -->
<!-- ===== shadows ===== -->
<g opacity=".62" fill="#2a0d06">
<ellipse cx="315" cy="233" rx="29" ry="25" filter="url(#b3)"/>
<path d="M370 210 H448 V246 H372 Z" filter="url(#b3)"/>
<rect x="293" y="267" width="52" height="79" filter="url(#b3)"/>
<rect x="362" y="268" width="96" height="62" filter="url(#b3)"/>
<rect x="480" y="242" width="21" height="100" filter="url(#b3)"/>
<rect x="498" y="246" width="28" height="22" filter="url(#b3)"/>
<rect x="529" y="199" width="62" height="112" filter="url(#b3)"/>
<rect x="600" y="212" width="62" height="60" filter="url(#b3)"/>
<rect x="627" y="262" width="25" height="122" filter="url(#b3)"/>
<rect x="538" y="328" width="74" height="78" filter="url(#b3)"/>
<rect x="485" y="357" width="40" height="36" filter="url(#b3)"/>
<rect x="295" y="365" width="50" height="30" filter="url(#b3)"/>
<circle cx="394" cy="382" r="20" filter="url(#b3)"/>
<circle cx="447" cy="378" r="21" filter="url(#b3)"/>
<rect x="291" y="435" width="100" height="54" rx="8" filter="url(#b3)"/>
<rect x="418" y="438" width="98" height="40" rx="8" filter="url(#b5)"/>
<path d="M414 404 L446 440 L500 440 L512 408 L520 412 L498 470 L512 500 L496 510 L470 476 L440 476 L424 506 L408 498 L430 470 Z" filter="url(#b3)" opacity=".7"/>
<rect x="540" y="427" width="116" height="58" filter="url(#b3)"/>
</g>
<!-- ===== lens hood ===== -->
<g filter="url(#soft)">
<ellipse cx="307" cy="223.300" rx="30.500" ry="26.300" fill="#17171a" transform="rotate(30 307 223.300)"/>
<circle cx="302.5" cy="219.5" r="23" fill="#0f0f12"/>
<circle cx="310" cy="228" r="16" fill="#3b3d42"/>
<circle cx="310" cy="228" r="12.8" fill="#45484d"/>
<rect x="304" y="216.5" width="12" height="5" rx="1.5" fill="#1d1e22"/>
<rect x="304" y="234.5" width="12" height="5" rx="1.5" fill="#1d1e22"/>
<rect x="305" y="226.5" width="10" height="1.6" fill="#8a8c90" opacity=".7"/>
</g>
<!-- ===== flash ===== -->
<g filter="url(#soft)">
<path d="M368 201 H396 V241 H369 L364 236 V206 Z" fill="#151517"/>
<rect x="393.500" y="197" width="45.500" height="38.500" rx="1.500" fill="#121214"/>
<rect x="396" y="235" width="40" height="7" fill="#161616"/>
<path d="M438 209 L446 211 L455 214 V230 L446 233 L438 234 Z" fill="#1a1717" opacity=".92"/>
<rect x="404" y="195" width="13" height="3.500" fill="#8d8d8d"/>
<rect x="395" y="203" width="7.500" height="24" fill="#6e7072"/>
<rect x="396.200" y="205" width="2.600" height="20" fill="#a9abab"/>
<rect x="407" y="200.500" width="24" height="32" fill="#d9d9d6"/>
<rect x="408.500" y="202.500" width="21" height="27.500" fill="#f3f3f1"/>
<rect x="432.500" y="204" width="3" height="24" fill="#3a3a3c"/>
<circle cx="365.500" cy="221" r="1" fill="#999"/>
</g>
<!-- ===== charger ===== -->
<g filter="url(#soft)">
<rect x="288.5" y="261" width="50.5" height="78" rx="3" fill="#2a2c32"/>
<rect x="290.5" y="263" width="46.5" height="74" rx="2" fill="#30333a"/>
<rect x="294" y="267.5" width="33" height="26" fill="#1e2025"/>
<rect x="298" y="271" width="25" height="21" fill="#3d4047"/>
<rect x="294" y="297" width="33" height="26" fill="#1e2025"/>
<rect x="298" y="300.500" width="25" height="21" fill="#3d4047"/>
<rect x="309" y="333" width="9" height="1.6" fill="#c9c9c9" opacity=".8"/>
</g>
<!-- ===== camera + cage ===== -->
<g filter="url(#soft)">
<rect x="376.5" y="261" width="53" height="12" rx="1.5" fill="#1b1b1e"/>
<rect x="381" y="263.500" width="44" height="2" fill="#4a4a4e"/>
<rect x="421" y="268" width="28.500" height="58" rx="2" fill="#8a8581"/>
<rect x="424" y="271" width="10" height="8" fill="#2a2827"/>
<rect x="441" y="270" width="8" height="54" fill="#a8a39e"/>
<g fill="#26221f"><circle cx="436" cy="287" r="1.600"/><circle cx="436" cy="293" r="1.600"/><circle cx="436" cy="299" r="1.600"/><circle cx="436" cy="305" r="1.600"/><circle cx="436" cy="311" r="1.600"/><circle cx="436" cy="317" r="1.600"/></g>
<rect x="357" y="287" width="22" height="31" rx="3" fill="#222226"/>
<rect x="372" y="272" width="56" height="46" fill="#19191b"/>
<rect x="378" y="312" width="46" height="8" fill="#b9b6b2"/>
<circle cx="400.800" cy="291.500" r="27.200" fill="#121214"/>
<circle cx="400.800" cy="291.500" r="23.500" fill="#2e2f33"/>
<circle cx="400.800" cy="291.500" r="20.500" fill="#0d0d0f"/>
<circle cx="400.500" cy="291" r="12.500" fill="#1f2523"/>
<circle cx="400.500" cy="291" r="8" fill="#33433a"/>
<path d="M396 285 H401 V291 H396 Z" fill="#a9d7b0" opacity=".8"/>
<path d="M401 291 H407 V297 H401 Z" fill="#8fc7a0" opacity=".7"/>
<!-- arm -->
<rect x="447" y="277.500" width="32" height="9.500" fill="#8f8a86"/>
<circle cx="452" cy="279" r="5" fill="#aaa6a2"/>
<circle cx="452" cy="279" r="2" fill="#4b4744"/>
<!-- handle -->
<rect x="463" y="242" width="13" height="18" rx="2" fill="#9a9794"/>
<rect x="465" y="244" width="5" height="14" fill="#d2d0cd"/>
<rect x="474.500" y="236" width="20" height="100.500" rx="2" fill="#a39f9b"/>
<rect x="476.500" y="238" width="5" height="96" fill="#bdb9b4" opacity=".8"/>
<circle cx="481.500" cy="244.500" r="5" fill="#141314"/>
<rect x="484.500" y="276" width="9.500" height="11" fill="#a02f3f"/>
<g fill="#1c1a19"><circle cx="484.500" cy="258" r="1.700"/><circle cx="484.500" cy="264" r="1.700"/><circle cx="486" cy="297" r="1.700"/><circle cx="486" cy="303" r="1.700"/><circle cx="486" cy="309" r="1.700"/><circle cx="486" cy="315" r="1.700"/><circle cx="486" cy="321" r="1.700"/><circle cx="487" cy="329" r="2.400"/></g>
<!-- ball head to LED -->
<path d="M494 252 L500 246 L506 250 L510 242 L514 248 L520 250 L524 246 V258 L516 262 H500 L494 258 Z" fill="#131313"/>
</g>
<!-- ===== LED panel ===== -->
<g filter="url(#soft)">
<rect x="524" y="193.500" width="60.500" height="109" rx="4.500" fill="#141517"/>
<rect x="530" y="200" width="50" height="97.500" rx="1" fill="url(#led)"/>
</g>
<!-- ===== gimbal ===== -->
<g filter="url(#soft)">
<path d="M615 199.500 H621.500 V203 H652.500 V199.500 H659.500 V211 H653.500 V206 H621.500 V213 H615 Z" fill="#151515"/>
<rect x="617" y="204" width="7.500" height="36" fill="#161616"/>
<rect x="650" y="204" width="6.500" height="22" fill="#161616"/>
<rect x="594" y="212.500" width="22.500" height="26" rx="6" fill="#19191a"/>
<rect x="611.500" y="213.500" width="2.600" height="24" fill="#8d8d8d"/>
<path d="M596 232 L616 226 L626 240 L634 258 L624 268 L606 246 Z" fill="#151515"/>
<rect x="616" y="222" width="16" height="26" fill="#18181a"/>
<rect x="628.500" y="217.500" width="25.500" height="33" rx="3.500" fill="#1b1b1c"/>
<rect x="628.500" y="233.500" width="25.500" height="3" fill="#b7b7b7"/>
<rect x="630" y="249" width="22" height="9" fill="#141414"/>
<rect x="622.500" y="256" width="23.500" height="121" rx="4" fill="#151516"/>
<rect x="622.500" y="262" width="23.500" height="3.200" fill="#c9c9c9"/>
<rect x="624" y="373.500" width="20.500" height="3.500" rx="1.500" fill="#b9b5b0"/>
<rect x="626" y="268" width="4" height="100" fill="#2c2c2e" opacity=".8"/>
<path d="M646 260 C658 266 660 292 649 304" fill="none" stroke="#1b1516" stroke-width="5.500"/>
<path d="M651 270 C655 278 655 288 651 296" fill="none" stroke="#9d3b3b" stroke-width="1.500"/>
<rect x="632" y="313" width="3" height="8" fill="#cfcfcf" opacity=".8"/>
</g>
<!-- ===== GoPro ===== -->
<g filter="url(#soft)">
<path d="M534 360 H571.500 V378 L576 380 V392 L566 394 L562 400 H548 L544 396 H534 L531 392 V380 L534 378 Z" fill="#121213"/>
<rect x="587.500" y="350" width="20.500" height="25" rx="2" fill="#171718"/>
<rect x="533.500" y="321.500" width="55" height="39" rx="3.500" fill="#1c1d21"/>
<rect x="537" y="323.500" width="50.500" height="36" rx="2.500" fill="#4a515e"/>
<rect x="538" y="324.500" width="48.500" height="23" rx="2" fill="#535b69"/>
<rect x="544" y="334" width="13" height="12.500" fill="#78808e"/>
<rect x="563.200" y="326" width="22.600" height="21.500" rx="2.500" fill="#24262b"/>
<circle cx="573.800" cy="336" r="6.200" fill="#15161a"/>
<circle cx="573.800" cy="336" r="3" fill="#4a4540"/>
<rect x="537" y="349" width="50.500" height="10.500" fill="#3d434e"/>
<rect x="570" y="352.500" width="12" height="1.600" fill="#9aa0a6" opacity=".7"/>
</g>
<!-- ===== small mount ===== -->
<g filter="url(#soft)">
<rect x="482" y="354.500" width="21.500" height="34.500" rx="2.500" fill="#121213"/>
<rect x="480" y="358" width="6" height="12" fill="#161617"/>
<rect x="500" y="355" width="17" height="6.500" fill="#1a1a1b"/>
<path d="M514.500 353 L521.500 352 L522 364 L514.500 363 Z" fill="#1a1a1b"/>
<rect x="486" y="362" width="13" height="21" fill="#1e1f21"/>
<circle cx="484" cy="358" r="1" fill="#7c7c7c"/>
</g>
<!-- ===== batteries ===== -->
<g filter="url(#soft)">
<rect x="292" y="360.500" width="24" height="28" rx="1.500" fill="#1f2024"/>
<rect x="318" y="360.500" width="24" height="28" rx="1.500" fill="#1f2024"/>
<rect x="294" y="363" width="20" height="12" fill="#2c2e33"/>
<rect x="320" y="363" width="20" height="12" fill="#2c2e33"/>
</g>
<!-- ===== lens cap ===== -->
<g filter="url(#soft)">
<circle cx="390.200" cy="377.500" r="20.500" fill="#1a1a1c"/>
<circle cx="390.200" cy="377.500" r="17.500" fill="#222326"/>
</g>
<!-- ===== small lens ===== -->
<g filter="url(#soft)">
<circle cx="442" cy="373" r="21" fill="#8f8f8b"/>
<circle cx="442" cy="373" r="19.500" fill="#c2c2bd"/>
<circle cx="442" cy="373" r="17" fill="#3a3a3b"/>
<circle cx="442" cy="373" r="14" fill="#151517"/>
<circle cx="442" cy="373" r="9.500" fill="#2a2b2e"/>
<circle cx="442" cy="373" r="5.500" fill="#0d0d0f"/>
<path d="M430 383 A16 16 0 0 0 452 386" fill="none" stroke="#d8d8d4" stroke-width="1.500" opacity=".7"/>
</g>
<!-- ===== remote ===== -->
<g filter="url(#soft)">
<path d="M306 429 Q306 425 310 425 H365 Q369 425 369 429 V434 H306 Z" fill="#35383e"/>
<rect x="309" y="426" width="57" height="2.500" fill="#5d6168"/>
<path d="M292 432 Q312 428 337 430 Q362 428 378 432 Q384 434 384 442 V470 Q384 480 374 481 L340 482 L296 481 Q286 479 286 470 V442 Q286 434 292 432 Z" fill="#25272c"/>
<path d="M300 435 Q337 431 372 435 L362 446 Q337 450 312 446 Z" fill="#1a1b1f"/>
<path d="M298 470 L318 464 H356 L376 470 V476 Q337 483 298 476 Z" fill="#2f3238"/>
<path d="M337 464 V481" stroke="#17181b" stroke-width="1"/>
<circle cx="295.500" cy="458" r="10" fill="#17181b"/>
<circle cx="294" cy="457.500" r="5.500" fill="#35373c"/>
<circle cx="292.500" cy="456" r="2.200" fill="#8e9196"/>
<circle cx="369" cy="456" r="10" fill="#17181b"/>
<circle cx="367.500" cy="455.500" r="5.500" fill="#35373c"/>
<circle cx="366" cy="454" r="2.200" fill="#8e9196"/>
<circle cx="315" cy="459.500" r="3" fill="#15161a"/>
<circle cx="315" cy="459.500" r="1.300" fill="#6b2f3a"/>
<circle cx="349.500" cy="459" r="3" fill="#15161a"/>
<rect x="328" y="455" width="8" height="5" rx="1" fill="#17181b"/>
<rect x="330" y="441" width="7" height="3" fill="#c9c9c9" opacity=".8"/>
<circle cx="291" cy="441" r="2" fill="#17181b"/><circle cx="376" cy="440" r="2" fill="#17181b"/>
</g>
<!-- ===== drone ===== -->
<g filter="url(#soft)">
<g fill="#141416">
<path d="M410.500 409.500 L424 402 L444.500 436 L429 441.500 Z"/>
<path d="M508.500 410.500 L495 403 L474.500 435 L490 441 Z"/>
<path d="M427 468 L441.500 471 L424 501.500 L409 494 Z"/>
<path d="M476.500 470.500 L491 468 L507.500 498 L493.500 505.500 Z"/>
</g>
<circle cx="417.500" cy="406.500" r="8.200" fill="#17171a"/>
<circle cx="417.500" cy="405.500" r="2.600" fill="#4a4a4e"/>
<circle cx="501.500" cy="407.500" r="8.200" fill="#17171a"/>
<circle cx="501.500" cy="406.500" r="2.600" fill="#4a4a4e"/>
<path d="M421 416 L437 440" stroke="#303034" stroke-width="2" fill="none"/>
<path d="M499 418 L484 440" stroke="#303034" stroke-width="2" fill="none"/>
<circle cx="414" cy="497" r="1.300" fill="#888"/>
<circle cx="501" cy="501.500" r="1.800" fill="#d0d0d0"/>
<path d="M420 434.500 H496 Q505 437 505 452.500 Q505 468 496 470.500 H420 Q413 466 413 452.500 Q413 439 420 434.500 Z" fill="#e9e9e5"/>
<path d="M420 434.500 H496 Q503 436 504.500 446 Q470 441 415 444 Q416 438 420 434.500 Z" fill="#f6f6f4"/>
<path d="M416 464 Q460 461 502 463 Q499 470 496 470.500 H420 Z" fill="#c9c7c2"/>
<path d="M437.500 438.500 L434.500 432.500 M481 437.500 L484.500 431.500 M434 467.500 L431 474.500 M484.500 467.500 L487.500 474.500" stroke="#c4c8cc" stroke-width="1.700"/>
<circle cx="497" cy="452" r="1.800" fill="#b5b5b0"/>
</g>
<!-- ===== power bank ===== -->
<g filter="url(#soft)">
<path d="M541 421.500 H644 L649 426 V472 L644 476.500 H541 L536.500 472 V426 Z" fill="#b95a3d"/>
<path d="M541 421.500 H644 L649 426 V430 H536.500 V426 Z" fill="#cf6e4e" opacity=".7"/>
<rect x="541" y="426.500" width="103.500" height="45" rx="3" fill="#1d202b"/>
<rect x="541" y="447.500" width="103.500" height="1.800" fill="#0c0d13"/>
<rect x="541" y="426.500" width="103.500" height="21" rx="3" fill="#22263a" opacity=".5"/>
</g>
<!-- ===== GoPro label ===== -->
<g>
<clipPath id="lblClip"><rect x="318.500" y="317" width="125.200" height="56.400" rx="11.500"/></clipPath>
<linearGradient id="lblG" x1="0" x2="0" y1="317" y2="373.400" gradientUnits="userSpaceOnUse"><stop offset="0" stop-color="#a39a95"/><stop offset=".45" stop-color="#8f8783"/><stop offset=".7" stop-color="#75706f"/><stop offset="1" stop-color="#666364"/></linearGradient>
<g clip-path="url(#lblClip)">
<rect x="318" y="316" width="127" height="58" fill="url(#lblG)"/>
<ellipse cx="332" cy="330" rx="16" ry="14" fill="#b3aaa5" filter="url(#b5)"/>
<ellipse cx="396" cy="321" rx="30" ry="13" fill="#5a5554" filter="url(#b5)"/>
<ellipse cx="366" cy="324" rx="10" ry="10" fill="#6f6866" filter="url(#b5)"/>
<ellipse cx="436" cy="338" rx="10" ry="16" fill="#96705f" filter="url(#b5)"/>
<ellipse cx="426" cy="322" rx="8" ry="7" fill="#7a7370" filter="url(#b5)"/>
<ellipse cx="334" cy="368" rx="20" ry="10" fill="#4e4c4f" filter="url(#b5)"/>
<ellipse cx="390" cy="368" rx="24" ry="10" fill="#4b4848" filter="url(#b5)"/>
<ellipse cx="434" cy="366" rx="12" ry="9" fill="#5c5856" filter="url(#b5)"/>
<ellipse cx="358" cy="346" rx="14" ry="8" fill="#8d8480" filter="url(#b5)"/>
</g>
<rect x="319" y="317.500" width="124.200" height="55.400" rx="11" fill="none" stroke="#d9d4d0" stroke-opacity=".5" stroke-width="1"/>
<text x="380.300" y="351.700" text-anchor="middle" textLength="58" lengthAdjust="spacingAndGlyphs" font-family="'DejaVu Sans',sans-serif" font-size="13.600" font-weight="700" font-style="italic" fill="#fff">GoPro</text>
</g>
<!-- OBJECTS_END -->
</g>
</svg>
<div id="right"></div>
<div class="t" style="left:869px;top:108.300px;font-size:11.500px;font-weight:700;color:#222;letter-spacing:.05px">设置背景格式</div>
<svg style="left:1062.5px;top:107.5px" width="11" height="11" viewBox="0 0 11 11"><circle cx="5.5" cy="5.5" r="5.5" fill="#5f5f5f"/><path d="M3.4 3.4 L7.6 7.6 M7.6 3.4 L3.4 7.6" stroke="#ececec" stroke-width="1.3" stroke-linecap="round"/></svg>
<div class="abs" style="left:856px;top:161.5px;width:224px;height:1px;background:#d3d3d3"></div>
<div class="abs" style="left:864.5px;top:135px;width:28.5px;height:27.5px;background:#f4f4f4;border:1px solid #dadada;border-bottom:none;border-radius:2px 2px 0 0"></div>
<svg style="left:870.5px;top:140px" width="18" height="17" viewBox="0 0 18 17" fill="none"><path d="M1.2 9 L8.2 2.2 L12.4 9.6 L6.4 14.6 Z" fill="#fbfbfb" stroke="#4a4a4a" stroke-width="1.1" stroke-linejoin="round"/><path d="M8.2 2.2 C7.6 .4 9.8 .2 10 2.6" stroke="#4a4a4a" stroke-width="1"/><path d="M11.200 6.400 C13.800 4.600 16 6.400 15.600 9.400 C15.400 11.400 16.400 12.800 15.600 15.200 C13.800 13.400 13.200 11.200 13.600 9.200 C13.700 8 12.800 7.400 11.800 8 Z" fill="#2e7fd0"/></svg>
<div class="abs" style="left:856px;top:165.5px;width:224px;height:19.5px;background:linear-gradient(#e0e0e0,#dadada)"></div>
<svg style="left:862px;top:173.5px" width="6" height="4" viewBox="0 0 6 4"><path d="M.6 .6 L3 3 L5.4 .6" fill="none" stroke="#666" stroke-width=".9" stroke-linecap="round"/></svg>
<div class="t" style="left:872px;top:170px;font-size:10px;color:#222">填充</div>
<!-- radios -->
<div class="abs" style="left:867.5px;top:193px;width:10px;height:10px;border-radius:50%;background:#fff;border:3px solid #bf3b22"></div>
<div class="abs" style="left:867.5px;top:207px;width:10px;height:10px;border-radius:50%;background:#f8f8f8;box-shadow:0 0 0 .5px #dcdcdc"></div>
<div class="abs" style="left:867.5px;top:221px;width:10px;height:10px;border-radius:50%;background:#f8f8f8;box-shadow:0 0 0 .5px #dcdcdc"></div>
<div class="abs" style="left:867.5px;top:235.5px;width:10px;height:10px;border-radius:50%;background:#f8f8f8;box-shadow:0 0 0 .5px #dcdcdc"></div>
<div class="rt" style="left:883px;top:193.5px">纯色填充</div>
<div class="rt" style="left:883px;top:207.5px">渐变填充</div>
<div class="rt" style="left:883px;top:221.5px">图片或纹理填充</div>
<div class="rt" style="left:883px;top:236px">图案填充</div>
<div class="abs" style="left:868.5px;top:253.5px;width:9.5px;height:9.5px;border-radius:2px;background:#f9f9f9;box-shadow:0 0 0 .5px #dcdcdc"></div>
<div class="rt" style="left:883.5px;top:254px">隐藏背景图形</div>
<div class="abs" style="left:868px;top:268px;width:198px;height:1px;background:#dedede"></div>
<div class="rt" style="left:868px;top:276.5px">颜色</div>
<div class="abs" style="left:1039px;top:273.5px;width:27px;height:16px;border-radius:2px;background:#dcdcdc;border:1px solid #cfcfcf"></div>
<svg style="left:1044px;top:275px" width="12" height="13" viewBox="0 0 12 13" fill="none"><path d="M2 6 L5.6 1.6 L8.4 6.4 L4.6 9 Z" fill="#f6f6f6" stroke="#5c6c84" stroke-width=".9" stroke-linejoin="round"/><path d="M8 4 C9.6 5 9.6 7.6 9.2 9.4 C8.4 8 8.2 6.4 8 4 Z" fill="#2f7fd0"/><rect x="1" y="10.2" width="10" height="2.2" fill="#fff"/></svg>
<svg style="left:1059px;top:280.5px" width="5" height="3" viewBox="0 0 5 3"><path d="M.4 .3 H4.6 L2.5 2.8 Z" fill="#555"/></svg>
<div class="rt" style="left:868px;top:298.5px">透明度</div>
<div class="abs" style="left:936px;top:301.5px;width:77px;height:1.5px;background:#d6d6d6;border-radius:1px"></div>
<div class="abs" style="left:931px;top:297px;width:10.5px;height:10.5px;border-radius:50%;background:#fbfbfb;box-shadow:0 .5px 1px rgba(0,0,0,.25),0 0 0 .5px #e0e0e0"></div>
<div class="abs" style="left:1019px;top:295.5px;width:47px;height:17px;border-radius:2.5px;background:#fdfdfd;border:1px solid #d9d9d9"></div>
<div class="t" style="left:1023px;top:299.5px;font-size:9px;color:#333">0%</div>
<svg style="left:1058px;top:298.5px" width="5" height="11" viewBox="0 0 5 11"><path d="M.5 3.2 L2.5 .6 L4.5 3.2 Z M.5 7.8 L2.5 10.4 L4.5 7.8 Z" fill="#555"/></svg>
<!-- bottom buttons -->
<div class="abs" style="left:910px;top:579px;width:52.5px;height:14.5px;border-radius:7px;background:#fcfcfc;box-shadow:0 0 0 .5px #e0e0e0"></div>
<div class="t" style="left:918px;top:581.5px;font-size:9px;font-weight:500;color:#222">全部应用</div>
<div class="abs" style="left:972.5px;top:579px;width:52px;height:14.5px;border-radius:7px;background:#fcfcfc;box-shadow:0 0 0 .5px #e0e0e0"></div>
<div class="t" style="left:980px;top:581.5px;font-size:9px;font-weight:500;color:#222">重设背景</div>
<div id="notes"></div>
<div class="t" style="left:88px;top:579px;font-size:9.6px;font-weight:600;color:#222;font-family:'Liberation Serif','Noto Serif CJK SC',serif">单击此处添加备注</div>
<div id="status"></div>
<div class="st" style="left:18px">幻灯片 2 / 2</div>
<div class="st" style="left:83px">中文 (中国)</div>
<!-- notes -->
<svg style="left:703.5px;top:605.5px" width="10" height="9" viewBox="0 0 10 9" fill="none" stroke="#5a5a5a" stroke-width="1"><path d="M.4 2.6 H9.6 M.4 5 H6 M.4 7.4 H6"/><path d="M6.6 .6 L8 0 L9.4 .6" stroke-width=".8"/></svg>
<div class="st" style="left:716px;color:#3f3f3f">备注</div>
<svg style="left:749.5px;top:605.5px" width="10" height="9" viewBox="0 0 10 9"><path d="M.4 .4 H9.6 V6.2 H4.6 L2.8 8.4 V6.2 H.4 Z" fill="#3d3d3d"/></svg>
<div class="st" style="left:762px;color:#3f3f3f">批注</div>
<div class="abs" style="left:789px;top:601.5px;width:27px;height:17px;background:#8f8f8f"></div>
<svg style="left:797.5px;top:605px" width="10" height="10" viewBox="0 0 10 10" fill="none"><rect x=".6" y=".6" width="8.8" height="8.8" fill="#f2f2f2" stroke="#f2f2f2" stroke-width="1"/><path d="M3 1 V9" stroke="#8f8f8f" stroke-width="1"/><path d="M4.6 3 H8 M4.6 5 H8" stroke="#8f8f8f" stroke-width="1"/></svg>
<svg style="left:823.5px;top:605.5px" width="12" height="9" viewBox="0 0 12 9" fill="#4a4a4a"><rect x="0" y="0" width="4.6" height="3.4"/><rect x="6.6" y="0" width="4.6" height="3.4"/><rect x="0" y="5.4" width="4.6" height="3.4"/><rect x="6.6" y="5.4" width="4.6" height="3.4"/></svg>
<svg style="left:850.5px;top:605px" width="13" height="10" viewBox="0 0 13 10" fill="none" stroke="#5a5a5a" stroke-width=".9"><path d="M.6 .8 H5.4 L6.5 1.8 L7.6 .8 H12.4 V8.6 H7.6 L6.5 9.4 L5.4 8.6 H.6 Z M6.5 1.8 V9.2"/><path d="M2 3 H4.8 M2 5 H4.8 M8.2 3 H11 M8.2 5 H11" stroke-width=".7"/></svg>
<svg style="left:877px;top:605px" width="13" height="11" viewBox="0 0 13 11" fill="none" stroke="#4f4f4f" stroke-width="1"><rect x=".8" y=".8" width="11.4" height="6.6"/><path d="M6.5 7.6 V9.6 M4 10.2 H9 M4.6 3 H8.4"/></svg>
<div class="abs" style="left:903.5px;top:609.5px;width:5px;height:1.4px;background:#444"></div>
<div class="abs" style="left:913px;top:609.5px;width:75px;height:1.4px;background:#9a9a9a;border-radius:1px"></div>
<div class="abs" style="left:940.5px;top:604.5px;width:11px;height:11px;border-radius:50%;background:#fdfdfd;box-shadow:0 .5px 1px rgba(0,0,0,.3),0 0 0 .5px #d6d6d6"></div>
<div class="abs" style="left:994px;top:609.5px;width:6px;height:1.4px;background:#444"></div>
<div class="abs" style="left:996.3px;top:607.2px;width:1.4px;height:6px;background:#444"></div>
<div class="st" style="left:1015px;color:#3f3f3f">85%</div>
<svg style="left:1050.5px;top:604px" width="12" height="12" viewBox="0 0 12 12" fill="none" stroke="#555" stroke-width=".9"><rect x=".6" y=".6" width="10.8" height="10.8" rx=".8"/><path d="M2.4 4.4 V2.4 H4.4 M7.6 2.4 H9.6 V4.4 M9.6 7.6 V9.6 H7.6 M4.4 9.6 H2.4 V7.6"/><path d="M2.6 2.6 L4.8 4.8 M9.4 2.6 L7.2 4.8 M9.4 9.4 L7.2 7.2 M2.6 9.4 L4.8 7.2" stroke-width=".7"/></svg>
<!-- bottom window edge -->
<div class="abs" style="left:0;top:618px;width:1080px;height:2px;background:linear-gradient(rgba(60,50,55,.35),#3a3338)"></div>
<div class="abs" style="left:0;top:613px;width:7px;height:7px;background:radial-gradient(circle at 100% 0%,rgba(0,0,0,0) 6px,#c9a4ac 6.5px,#7a5560 7.5px)"></div>
</div>
</body>
</html>
